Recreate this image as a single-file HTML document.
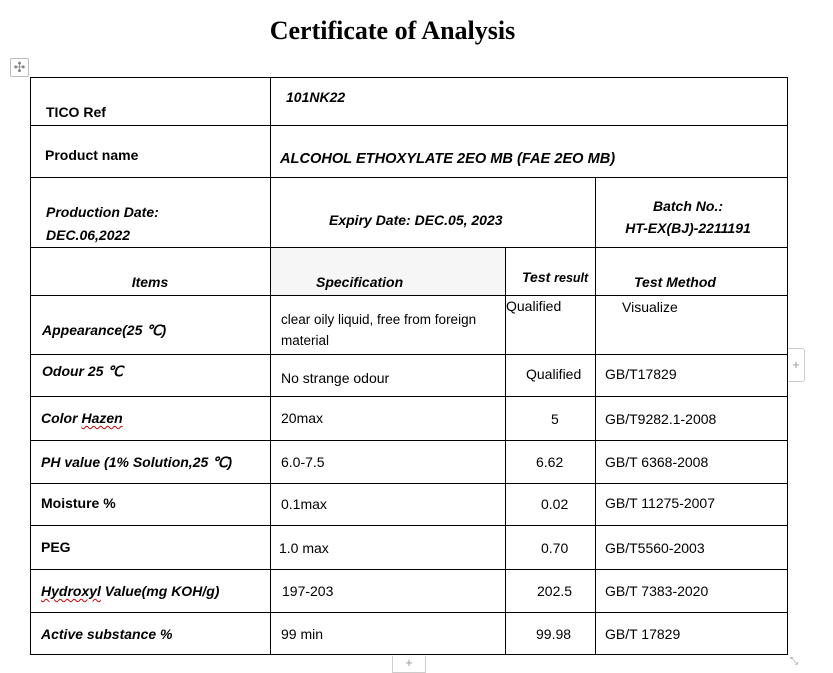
<!DOCTYPE html>
<html><head><meta charset="utf-8"><style>
body{margin:0;width:833px;height:670px;background:#fff;position:relative;overflow:hidden;font-family:"Liberation Sans",Arial,sans-serif;color:#000}
.t{position:absolute;font-size:14px;line-height:16px;white-space:nowrap}
.b{font-weight:bold}.i{font-style:italic}
.h{position:absolute;height:1px;background:#000;left:30px;width:758px}
.v{position:absolute;width:1px;background:#000}
.c{transform:translateX(-50%)}
.sq{text-decoration:underline wavy #c00;text-decoration-thickness:1px;text-underline-offset:2px}
.dc{letter-spacing:-0.5px}
</style></head><body>
<div style="position:absolute;left:0;width:785px;top:15px;text-align:center;font-family:'Liberation Serif',serif;font-weight:bold;font-size:26px;line-height:32px">Certificate of Analysis</div>
<div style="position:absolute;left:10px;top:58px;width:17px;height:17px;border:1px solid #bbb;border-radius:2px;color:#888;font-size:14px;line-height:17px;text-align:center">✣</div>
<div style="position:absolute;left:271px;top:248px;width:234px;height:47px;background:#f6f6f6"></div>
<div class="h" style="top:77px"></div><div class="h" style="top:125px"></div><div class="h" style="top:177px"></div><div class="h" style="top:247px"></div><div class="h" style="top:295px"></div><div class="h" style="top:354px"></div><div class="h" style="top:396px"></div><div class="h" style="top:440px"></div><div class="h" style="top:483px"></div><div class="h" style="top:525px"></div><div class="h" style="top:569px"></div><div class="h" style="top:612px"></div><div class="h" style="top:654px"></div>
<div class="v" style="left:30px;top:77px;height:578px"></div>
<div class="v" style="left:787px;top:77px;height:578px"></div>
<div class="v" style="left:270px;top:77px;height:578px"></div>
<div class="v" style="left:595px;top:177px;height:478px"></div>
<div class="v" style="left:505px;top:247px;height:408px"></div>
<div style="position:absolute;left:788px;top:348px;width:16px;height:32px;border:1px solid #ccc;border-left:none;border-radius:0 3px 3px 0;color:#999;font-size:13px;line-height:32px;text-align:center">+</div>
<div style="position:absolute;left:392px;top:656px;width:32px;height:16px;border:1px solid #ccc;border-top:none;color:#999;font-size:13px;line-height:14px;text-align:center">+</div>
<div style="position:absolute;left:790px;top:656px;color:#999;font-size:10px">⤡</div>

<div class="t b" style="left:46px;top:104px">TICO Ref</div>
<div class="t b i" style="left:286px;top:89px">101NK22</div>
<div class="t b" style="left:45px;top:147px">Product name</div>
<div class="t b i" style="left:280px;top:151px;font-size:14.6px">ALCOHOL ETHOXYLATE 2EO MB (FAE 2EO MB)</div>
<div class="t b i" style="left:46px;top:204px">Production Date:</div>
<div class="t b i" style="left:46px;top:227px">DEC.06,2022</div>
<div class="t b i" style="left:329px;top:212px">Expiry Date: DEC.05, 2023</div>
<div class="t b i c" style="left:688px;top:198px">Batch No.:</div>
<div class="t b i c" style="left:688px;top:220px">HT-EX(BJ)-2211191</div>
<div class="t b i c" style="left:150px;top:274px">Items</div>
<div class="t b i" style="left:316px;top:274px">Specification</div>
<div class="t b i" style="left:522px;top:269px">Test <span style="font-size:12.5px">result</span></div>
<div class="t b i" style="left:634px;top:274px">Test Method</div>

<div class="t b i" style="left:42px;top:322px">Appearance(25 <span class="dc">℃</span>)</div>
<div class="t" style="left:281px;top:312px;font-size:13.5px">clear oily liquid, free from foreign</div>
<div class="t" style="left:281px;top:333px;font-size:13.5px">material</div>
<div class="t" style="left:506px;top:298px">Qualified</div>
<div class="t" style="left:622px;top:299px">Visualize</div>

<div class="t b i" style="left:42px;top:363px">Odour 25 ℃</div>
<div class="t" style="left:281px;top:370px">No strange odour</div>
<div class="t" style="left:526px;top:366px">Qualified</div>
<div class="t" style="left:605px;top:366px">GB/T17829</div>

<div class="t b i" style="left:41px;top:410px">Color <span class="sq">Hazen</span></div>
<div class="t" style="left:281px;top:410px">20max</div>
<div class="t" style="left:551px;top:411px">5</div>
<div class="t" style="left:605px;top:411px">GB/T9282.1-2008</div>

<div class="t b i" style="left:41px;top:454px">PH value (1% Solution,25 <span class="dc">℃</span>)</div>
<div class="t" style="left:281px;top:454px">6.0-7.5</div>
<div class="t" style="left:536px;top:454px">6.62</div>
<div class="t" style="left:605px;top:454px">GB/T 6368-2008</div>

<div class="t b" style="left:41px;top:495px">Moisture %</div>
<div class="t" style="left:281px;top:496px">0.1max</div>
<div class="t" style="left:541px;top:496px">0.02</div>
<div class="t" style="left:605px;top:495px">GB/T 11275-2007</div>

<div class="t b" style="left:41px;top:539px">PEG</div>
<div class="t" style="left:279px;top:540px">1.0 max</div>
<div class="t" style="left:541px;top:540px">0.70</div>
<div class="t" style="left:605px;top:540px">GB/T5560-2003</div>

<div class="t b i" style="left:41px;top:583px"><span class="sq">Hydroxyl</span> Value(mg KOH/g)</div>
<div class="t" style="left:282px;top:583px">197-203</div>
<div class="t" style="left:537px;top:583px">202.5</div>
<div class="t" style="left:605px;top:583px">GB/T 7383-2020</div>

<div class="t b i" style="left:41px;top:626px">Active substance %</div>
<div class="t" style="left:281px;top:626px">99 min</div>
<div class="t" style="left:536px;top:626px">99.98</div>
<div class="t" style="left:605px;top:626px">GB/T 17829</div>
</body></html>
